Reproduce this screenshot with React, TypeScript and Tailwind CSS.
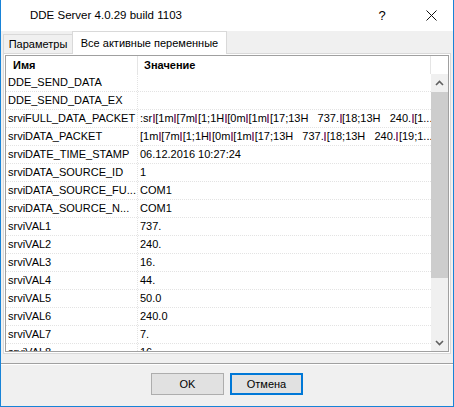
import React from 'react';

// small boxes for the control characters drawn by the list view
const Box = () => (
  <span className="inline-block w-[4px] h-[9px] mx-[0.5px] border border-[#8a6aa8] border-l-[#c05a7a] align-[-1px]" />
);

const FULL = (
  <>
    :sr<Box />[1m<Box />[7m<Box />[1;1H <Box />[0m<Box />[1m<Box />[17;13H&nbsp;&nbsp; 737.<Box />[18;13H&nbsp;&nbsp; 240.<Box />[1...
  </>
);

const PACKET = (
  <>
    [1m<Box />[7m<Box />[1;1H <Box />[0m<Box />[1m<Box />[17;13H&nbsp;&nbsp; 737.<Box />[18;13H&nbsp;&nbsp; 240.<Box />[19;1...
  </>
);

const ROWS: { name: string; value: React.ReactNode }[] = [
  { name: 'DDE_SEND_DATA', value: '' },
  { name: 'DDE_SEND_DATA_EX', value: '' },
  { name: 'srviFULL_DATA_PACKET', value: FULL },
  { name: 'srviDATA_PACKET', value: PACKET },
  { name: 'srviDATE_TIME_STAMP', value: '06.12.2016 10:27:24' },
  { name: 'srviDATA_SOURCE_ID', value: '1' },
  { name: 'srviDATA_SOURCE_FU...', value: 'COM1' },
  { name: 'srviDATA_SOURCE_N...', value: 'COM1' },
  { name: 'srviVAL1', value: '737.' },
  { name: 'srviVAL2', value: '240.' },
  { name: 'srviVAL3', value: '16.' },
  { name: 'srviVAL4', value: '44.' },
  { name: 'srviVAL5', value: '50.0' },
  { name: 'srviVAL6', value: '240.0' },
  { name: 'srviVAL7', value: '7.' },
  { name: 'srviVAL8', value: '16.' },
];

export default function App() {
  return (
    <div className="w-[454px] h-[407px] flex flex-col bg-[#f0f0f0] border-x border-b border-[#1883d7] text-black text-[11px] font-['Liberation_Sans',Arial,sans-serif] overflow-hidden">
      {/* Title bar */}
      <div className="h-[31px] shrink-0 bg-white flex items-center">
        <span className="pl-[29px] text-[11.5px] flex-1">DDE Server 4.0.29 build 1103</span>
        <span className="w-[20px] text-center text-[13px] mr-[34px]">?</span>
        <svg width="11" height="11" viewBox="0 0 11 11" className="mr-[16px]">
          <path d="M0.5 0.5 L10.5 10.5 M10.5 0.5 L0.5 10.5" stroke="#111" strokeWidth="1" />
        </svg>
      </div>

      {/* Tabs */}
      <div className="h-[22px] shrink-0 flex items-end pl-[2px]">
        <div className="h-[19px] w-[70px] border border-b-0 border-[#d9d9d9] bg-[#f0f0f0] flex items-center justify-center">
          Параметры
        </div>
        <div className="relative z-10 -ml-px -mb-px h-[23px] w-[155px] border border-b-0 border-[#d9d9d9] bg-white flex items-center justify-center">
          Все активные переменные
        </div>
      </div>

      {/* Tab panel */}
      <div className="mx-[2px] h-[301px] shrink-0 border border-[#d9d9d9] bg-white p-px">
        <div className="h-full border border-[#a0a0a0] flex flex-col overflow-hidden">
          {/* Header */}
          <div className="h-[18px] shrink-0 flex font-bold">
            <div className="w-[132px] shrink-0 border-r border-[#e5e5e5] pl-[7px] flex items-center">Имя</div>
            <div className="w-[293px] shrink-0 border-r border-[#e5e5e5] pl-[6px] flex items-center">Значение</div>
            <div className="flex-1" />
          </div>

          {/* Body */}
          <div className="flex-1 flex overflow-hidden">
            <div className="w-[425px] shrink-0 overflow-hidden">
              {ROWS.map((r) => (
                <div key={r.name} className="h-[18px] flex border-b border-dotted border-[#e3e3e3]">
                  <div className="w-[132px] shrink-0 border-r border-dotted border-[#e3e3e3] pl-[2px] flex items-center whitespace-nowrap overflow-hidden">
                    {r.name}
                  </div>
                  <div className="flex-1 pl-[2px] flex items-center whitespace-nowrap overflow-hidden">{r.value}</div>
                </div>
              ))}
            </div>

            {/* Scrollbar */}
            <div className="w-[17px] shrink-0 bg-[#f0f0f0] flex flex-col">
              <div className="h-[17px] flex items-center justify-center">
                <svg width="9" height="6" viewBox="0 0 9 6">
                  <path d="M1 5 L4.5 1.5 L8 5" stroke="#606060" strokeWidth="1.6" fill="none" />
                </svg>
              </div>
              <div className="mt-px h-[186px] bg-[#cdcdcd]" />
              <div className="flex-1" />
              <div className="h-[17px] flex items-center justify-center">
                <svg width="9" height="6" viewBox="0 0 9 6">
                  <path d="M1 1 L4.5 4.5 L8 1" stroke="#606060" strokeWidth="1.6" fill="none" />
                </svg>
              </div>
            </div>
          </div>
        </div>
      </div>

      {/* Separator */}
      <div className="mt-[9px] h-px shrink-0 bg-[#a0a0a0]" />
      <div className="h-px shrink-0 bg-white" />

      {/* Buttons */}
      <div className="mt-[8px] flex justify-center gap-[6px]">
        <button className="w-[73px] h-[22px] border border-[#adadad] bg-[#e1e1e1]">OK</button>
        <button className="w-[73px] h-[22px] border-2 border-[#0078d7] bg-[#e1e1e1]">Отмена</button>
      </div>
    </div>
  );
}
